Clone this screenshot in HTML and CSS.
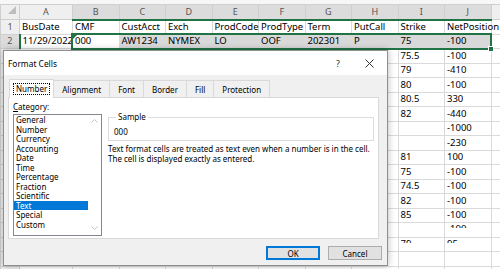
FILE: index.html
```html
<!DOCTYPE html>
<html lang="en">
<head>
    <meta charset="UTF-8">
    <title>Format Cells</title>
    <link rel="stylesheet" href="styles.css">
</head>
<body>
    <div class="sheet">
        <table class="grid">
            <colgroup>
                <col class="col-num"><col class="col-a">
                <col class="col-std"><col class="col-std"><col class="col-std"><col class="col-std"><col class="col-std">
                <col class="col-std"><col class="col-std"><col class="col-std"><col class="col-std">
                <col class="col-rest">
            </colgroup>
            <thead>
                <tr>
                    <th class="corner"><span class="tri"></span></th>
                    <th>A</th><th class="sel">B</th><th class="sel">C</th><th class="sel">D</th><th class="sel">E</th>
                    <th class="sel">F</th><th class="sel">G</th><th class="sel">H</th><th class="sel">I</th><th class="sel">J</th><th></th>
                </tr>
            </thead>
            <tbody>
                <tr><th>1</th><td>BusDate</td><td>CMF</td><td>CustAcct</td><td>Exch</td><td>ProdCode</td><td>ProdType</td><td>Term</td><td>PutCall</td><td>Strike</td><td>NetPosition</td><td></td></tr>
                <tr><th class="sel">2</th><td>11/29/2022</td><td>000</td><td class="hl">AW1234</td><td class="hl">NYMEX</td><td class="hl">LO</td><td class="hl">OOF</td><td class="hl">202301</td><td class="hl">P</td><td class="hl">75</td><td class="hl">-100</td><td></td></tr>
                <tr><th>3</th><td></td><td></td><td></td><td></td><td></td><td></td><td></td><td></td><td>75.5</td><td>-100</td><td></td></tr>
                <tr><th>4</th><td></td><td></td><td></td><td></td><td></td><td></td><td></td><td></td><td>79</td><td>-410</td><td></td></tr>
                <tr><th>5</th><td></td><td></td><td></td><td></td><td></td><td></td><td></td><td></td><td>80</td><td>-100</td><td></td></tr>
                <tr><th>6</th><td></td><td></td><td></td><td></td><td></td><td></td><td></td><td></td><td>80.5</td><td>330</td><td></td></tr>
                <tr><th>7</th><td></td><td></td><td></td><td></td><td></td><td></td><td></td><td></td><td>82</td><td>-440</td><td></td></tr>
                <tr><th>8</th><td></td><td></td><td></td><td></td><td></td><td></td><td></td><td></td><td></td><td>-1000</td><td></td></tr>
                <tr><th>9</th><td></td><td></td><td></td><td></td><td></td><td></td><td></td><td></td><td></td><td>-230</td><td></td></tr>
                <tr><th>10</th><td></td><td></td><td></td><td></td><td></td><td></td><td></td><td></td><td>81</td><td>100</td><td></td></tr>
                <tr><th>11</th><td></td><td></td><td></td><td></td><td></td><td></td><td></td><td></td><td>75</td><td>-100</td><td></td></tr>
                <tr><th>12</th><td></td><td></td><td></td><td></td><td></td><td></td><td></td><td></td><td>74.5</td><td>-100</td><td></td></tr>
                <tr><th>13</th><td></td><td></td><td></td><td></td><td></td><td></td><td></td><td></td><td>82</td><td>-100</td><td></td></tr>
                <tr><th>14</th><td></td><td></td><td></td><td></td><td></td><td></td><td></td><td></td><td>85</td><td>-100</td><td></td></tr>
                <tr class="cut"><th>15</th><td></td><td></td><td></td><td></td><td></td><td></td><td></td><td></td><td></td><td><span>-100</span></td><td></td></tr>
                <tr class="cut"><th>16</th><td></td><td></td><td></td><td></td><td></td><td></td><td></td><td></td><td><span>79</span></td><td><span>95</span></td><td></td></tr>
                <tr><th>17</th><td></td><td></td><td></td><td></td><td></td><td></td><td></td><td></td><td></td><td></td><td></td></tr>
                <tr><th>18</th><td></td><td></td><td></td><td></td><td></td><td></td><td></td><td></td><td></td><td></td><td></td></tr>
            </tbody>
        </table>

        <!-- selected range B2:J2 -->
        <div class="selection">
            <span class="flag"></span>
            <span class="handle"></span>
        </div>
    </div>

    <div class="dialog">
        <div class="titlebar">
            <span class="title">Format Cells</span>
            <span class="help">?</span>
            <span class="close">
                <svg width="9" height="9" viewBox="0 0 9 9"><path d="M0.5 0.5L8.5 8.5M8.5 0.5L0.5 8.5" stroke="#333" stroke-width="1"/></svg>
            </span>
        </div>

        <div class="tabs">
            <div class="tab active"><span class="focus">Number</span></div>
            <div class="tab">Alignment</div>
            <div class="tab">Font</div>
            <div class="tab">Border</div>
            <div class="tab">Fill</div>
            <div class="tab">Protection</div>
        </div>

        <div class="panel">
            <div class="category">
                <div class="label"><u>C</u>ategory:</div>
                <div class="list">
                    <ul class="items">
                        <li>General</li>
                        <li>Number</li>
                        <li>Currency</li>
                        <li>Accounting</li>
                        <li>Date</li>
                        <li>Time</li>
                        <li>Percentage</li>
                        <li>Fraction</li>
                        <li>Scientific</li>
                        <li class="on">Text</li>
                        <li>Special</li>
                        <li>Custom</li>
                    </ul>
                    <div class="scroll">
                        <svg width="7" height="4" viewBox="0 0 7 4"><path d="M0.5 3.5L3.5 0.5L6.5 3.5" fill="none" stroke="#c4c4c4"/></svg>
                        <svg width="7" height="4" viewBox="0 0 7 4"><path d="M0.5 0.5L3.5 3.5L6.5 0.5" fill="none" stroke="#c4c4c4"/></svg>
                    </div>
                </div>
            </div>

            <div class="detail">
                <fieldset class="sample">
                    <legend>Sample</legend>
                    <div class="sample-value">000</div>
                </fieldset>
                <p class="desc">Text format cells are treated as text even when a number is in the cell.<br>The cell is displayed exactly as entered.</p>
            </div>
        </div>

        <div class="footer">
            <button class="btn default">OK</button>
            <button class="btn">Cancel</button>
        </div>
    </div>
</body>
</html>
```

FILE: styles.css
```css
* {
    margin: 0;
    padding: 0;
    box-sizing: border-box;
}

body {
    width: 500px;
    height: 269px;
    overflow: hidden;
    position: relative;
    background: #ffffff;
    font-family: 'Noto Sans', sans-serif;
}

/* spreadsheet */
.sheet {
    position: relative;
    padding-top: 4px;
    background: #f7f7f7;
}

.grid {
    border-collapse: collapse;
    table-layout: fixed;
    width: 500px;
    font-size: 9.5px;
    color: #000;
    background: #fff;
}

.col-num { width: 19px; }
.col-a { width: 53px; }
.col-std { width: 46.5px; }
.col-rest { width: 9.5px; }

.grid th,
.grid td {
    height: 14.5px;
    padding: 0 2px;
    border: 1px solid #dadada;
    white-space: nowrap;
    text-align: left;
    font-weight: normal;
    line-height: 12px;
}

.grid thead th {
    height: 15px;
    background: #efefef;
    color: #555;
    text-align: center;
    font-size: 9px;
    border-color: #cfcfcf;
}

.grid tbody th {
    background: #efefef;
    color: #555;
    text-align: center;
    font-size: 9px;
    padding: 0;
    border-color: #cfcfcf;
}

.grid thead th.sel {
    background: #dcdcdc;
    border-bottom: 2px solid #217346;
}

.grid tbody th.sel {
    background: #dcdcdc;
    border-right: 2px solid #217346;
}

.grid td.hl {
    background: #d9d9d9;
}

.grid .corner {
    text-align: right;
    vertical-align: bottom;
}

.tri {
    display: inline-block;
    width: 0;
    height: 0;
    margin: 0 1px 2px 0;
    border-left: 8px solid transparent;
    border-bottom: 8px solid #bdbdbd;
}

.cut td {
    vertical-align: top;
}

.cut td span {
    display: block;
    height: 5px;
    overflow: hidden;
}

.selection {
    position: absolute;
    left: 71px;
    top: 33px;
    width: 421px;
    height: 17px;
    border: 2px solid #217346;
}

.flag {
    position: absolute;
    left: 0;
    top: 0;
    width: 0;
    height: 0;
    border-top: 4px solid #217346;
    border-right: 4px solid transparent;
}

.handle {
    position: absolute;
    right: -4px;
    bottom: -4px;
    width: 6px;
    height: 6px;
    background: #217346;
    border: 1px solid #fff;
}

/* dialog */
.dialog {
    position: absolute;
    left: 3px;
    top: 50px;
    width: 385px;
    height: 216px;
    background: #f0f0f0;
    border: 1px solid #8f8f8f;
    box-shadow: 0 0 7px rgba(0, 0, 0, 0.28);
    display: flex;
    flex-direction: column;
    font-size: 8px;
    color: #000;
}

.titlebar {
    height: 24px;
    display: flex;
    align-items: center;
    padding-left: 4px;
    background: #ffffff;
}

.title {
    flex: 1;
    font-size: 8.4px;
}

.help {
    width: 30px;
    text-align: center;
    font-size: 9px;
    color: #333;
}

.close {
    width: 32px;
    margin-right: 2px;
    display: flex;
    justify-content: center;
}

.tabs {
    display: flex;
    margin: 5px 0 0 5px;
    height: 17px;
    position: relative;
    z-index: 1;
}

.tab {
    display: flex;
    align-items: center;
    padding: 0 8px;
    border: 1px solid #d9d9d9;
    border-left: none;
    border-bottom: none;
    background: #f0f0f0;
    color: #000;
}

.tab.active {
    background: #ffffff;
    border-left: 1px solid #d9d9d9;
    padding: 0 3px;
    height: 19px;
    margin-top: -1px;
}

.focus {
    border: 1px dotted #000;
    padding: 0 2px;
    line-height: 10px;
}

.panel {
    height: 142px;
    margin: 0 8px 0 4px;
    padding: 4px 4px 2px 4px;
    background: #ffffff;
    border: 1px solid #d9d9d9;
    display: flex;
    gap: 6px;
}

.category {
    width: 89px;
}

.label {
    line-height: 10px;
    margin-bottom: 2px;
}

.list {
    height: 122px;
    border: 1px solid #828790;
    display: flex;
    background: #fff;
}

.items {
    list-style: none;
    flex: 1;
}

.items li {
    line-height: 9.5px;
    padding-left: 2px;
}

.items li.on {
    background: #0078d7;
    color: #fff;
}

.scroll {
    width: 13px;
    display: flex;
    flex-direction: column;
    justify-content: space-between;
    align-items: center;
    padding: 4px 0 5px;
}

.detail {
    flex: 1;
}

.sample {
    margin-top: 10px;
    border: 1px solid #dcdcdc;
    padding: 0 5px 3px;
}

.sample legend {
    margin-left: 2px;
    padding: 0 2px;
    line-height: 10px;
}

.sample-value {
    padding-top: 5px;
    line-height: 10px;
}

.desc {
    margin-top: 3px;
    line-height: 9.5px;
}

.footer {
    flex: 1;
    display: flex;
    justify-content: flex-end;
    align-items: center;
    gap: 8px;
    padding: 2px 5px 0 0;
}

.btn {
    width: 54px;
    height: 14px;
    font-family: 'Noto Sans', sans-serif;
    font-size: 8px;
    background: #e1e1e1;
    border: 1px solid #adadad;
    color: #000;
}

.btn.default {
    border-color: #0078d7;
    box-shadow: inset 0 0 0 1px #0078d7;
}
```
